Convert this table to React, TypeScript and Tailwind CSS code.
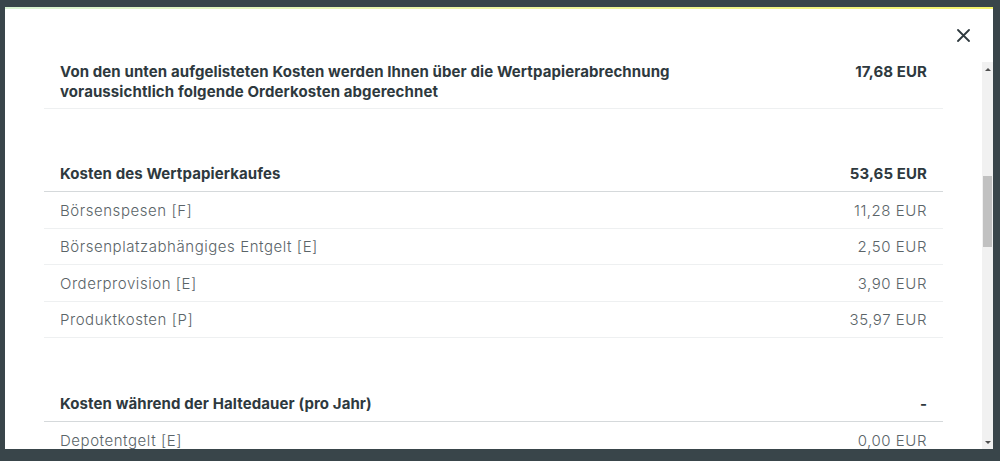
import React from "react";

type Row = { label: string; value: string };

const kaufRows: Row[] = [
  { label: "Börsenspesen [F]", value: "11,28 EUR" },
  { label: "Börsenplatzabhängiges Entgelt [E]", value: "2,50 EUR" },
  { label: "Orderprovision [E]", value: "3,90 EUR" },
  { label: "Produktkosten [P]", value: "35,97 EUR" },
];

function SectionHead({ label, value }: Row) {
  return (
    <div className="flex h-[36px] items-center justify-between border-b border-[#d5d9db] px-4 pt-[2px] text-[15px] font-bold tracking-[0.1px] text-[#2e393e]">
      <span>{label}</span>
      <span>{value}</span>
    </div>
  );
}

function CostRow({ label, value }: Row) {
  return (
    <div className="flex h-[36.5px] items-center justify-between border-b border-[#eef0f1] px-4 pt-[2px] text-[15px] font-light tracking-[0.55px] text-[#5a6468]">
      <span>{label}</span>
      <span>{value}</span>
    </div>
  );
}

function Scrollbar() {
  return (
    <div className="flex w-[11px] flex-col items-center bg-[#f1f1f1]">
      <div className="mt-[6px] h-0 w-0 border-x-[3px] border-b-[3px] border-x-transparent border-b-[#505050]" />
      <div className="mt-[105px] h-[71px] w-[9px] bg-[#c1c1c1]" />
      <div className="mt-auto mb-[5px] h-0 w-0 border-x-[3px] border-t-[3px] border-x-transparent border-t-[#505050]" />
    </div>
  );
}

export default function App() {
  return (
    <div className="h-[461px] w-[1000px] overflow-hidden bg-[#39454a] pt-[7px] pl-[5px]" style={{ fontFamily: "Inter, 'Open Sans', sans-serif" }}>
      <div className="flex h-[442px] w-[988px] flex-col bg-white">
        <div className="h-[2px] bg-gradient-to-r from-[#d9f3d3] via-[#eef6a0] to-[#f3f36a]" />
        {/* Header with close */}
        <div className="flex h-[53px] items-start justify-end pr-[23px] pt-[20px]">
          <svg width="13" height="13" viewBox="0 0 13 13" className="text-[#2f3a3f]">
            <path d="M1 1 L12 12 M12 1 L1 12" stroke="currentColor" strokeWidth="1.8" strokeLinecap="round" />
          </svg>
        </div>
        <div className="flex min-h-0 flex-1">
          <div className="flex-1 overflow-hidden pl-[39px] pr-[39px]">
            <div className="flex items-start justify-between border-b border-[#eef0f1] px-4 pb-[6px] text-[15px] font-bold leading-5 tracking-[0.1px] text-[#2e393e]">
              <span className="w-[660px]">
                Von den unten aufgelisteten Kosten werden Ihnen über die Wertpapierabrechnung voraussichtlich folgende Orderkosten abgerechnet
              </span>
              <span>17,68 EUR</span>
            </div>
            <div className="mt-[47px]">
              <SectionHead label="Kosten des Wertpapierkaufes" value="53,65 EUR" />
              {kaufRows.map((r) => (
                <CostRow key={r.label} {...r} />
              ))}
            </div>
            <div className="mt-[48px]">
              <SectionHead label="Kosten während der Haltedauer (pro Jahr)" value="-" />
              <CostRow label="Depotentgelt [E]" value="0,00 EUR" />
            </div>
          </div>
          <Scrollbar />
        </div>
      </div>
    </div>
  );
}
